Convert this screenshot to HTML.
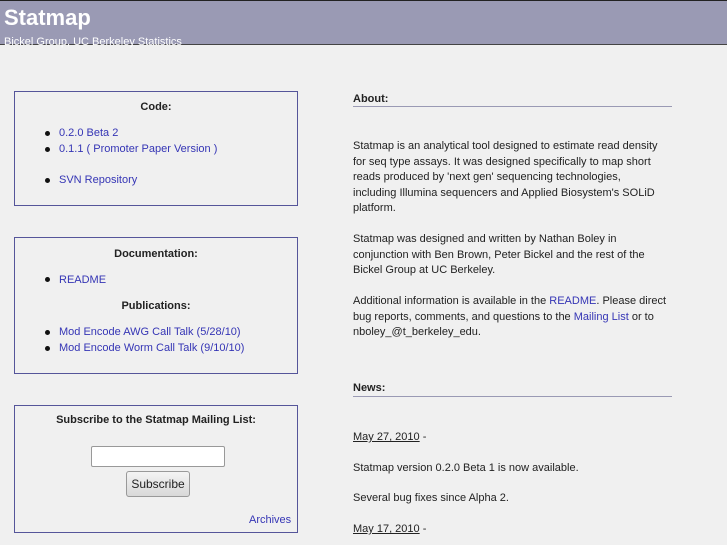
<!DOCTYPE html>
<html><head><meta charset="utf-8"><style>
*{margin:0;padding:0;box-sizing:border-box}
body{width:727px;height:545px;overflow:hidden;background:#f0f0f0;font-family:"Liberation Sans",sans-serif;font-size:11px;color:#222;position:relative}
.a{position:absolute;white-space:nowrap}
a{color:#3535b5;text-decoration:none}
#hd{position:absolute;left:0;top:0;width:727px;height:45px;background:#9a9ab4;border-top:1px solid #222;border-bottom:1px solid #444}
.box{position:absolute;left:14px;width:284px;border:1px solid #55559a;background:#f0f0f0}
.b{font-weight:bold}
.dot{position:absolute;width:5px;height:5px;border-radius:50%;background:#111}
.hr{position:absolute;left:353px;width:319px;height:1px;background:#9a9ab4}
.p{position:absolute;left:353px;line-height:15.5px;width:330px}
</style></head><body>
<div id="hd"></div>
<div class="a" style="left:4px;top:5px;font-size:22px;font-weight:bold;color:#fff">Statmap</div>
<div class="a" style="left:4px;top:36px;font-size:11px;color:#fff">Bickel Group, UC Berkeley Statistics</div>

<div class="box" style="top:91px;height:115px"></div>
<div class="a b" style="left:14px;width:284px;text-align:center;top:101px">Code:</div>
<div class="dot" style="left:45px;top:131px"></div><a class="a" style="left:59px;top:127px">0.2.0 Beta 2</a>
<div class="dot" style="left:45px;top:147px"></div><a class="a" style="left:59px;top:143px">0.1.1 ( Promoter Paper Version )</a>
<div class="dot" style="left:45px;top:178px"></div><a class="a" style="left:59px;top:174px">SVN Repository</a>

<div class="box" style="top:237px;height:137px"></div>
<div class="a b" style="left:14px;width:284px;text-align:center;top:248px">Documentation:</div>
<div class="dot" style="left:45px;top:277px"></div><a class="a" style="left:59px;top:274px">README</a>
<div class="a b" style="left:14px;width:284px;text-align:center;top:300px">Publications:</div>
<div class="dot" style="left:45px;top:330px"></div><a class="a" style="left:59px;top:326px">Mod Encode AWG Call Talk (5/28/10)</a>
<div class="dot" style="left:45px;top:346px"></div><a class="a" style="left:59px;top:342px">Mod Encode Worm Call Talk (9/10/10)</a>

<div class="box" style="top:405px;height:128px"></div>
<div class="a b" style="left:14px;width:284px;text-align:center;top:414px">Subscribe to the Statmap Mailing List:</div>
<div style="position:absolute;left:91px;top:446px;width:134px;height:21px;background:#fff;border:1px solid #999;border-radius:2px"></div>
<div style="position:absolute;left:126px;top:471px;width:64px;height:26px;background:linear-gradient(#f4f4f4,#d8d8d8);border:1px solid #999;border-radius:3px;text-align:center;line-height:25px;font-size:12px">Subscribe</div>
<a class="a" style="left:249px;top:514px">Archives</a>

<div class="a b" style="left:353px;top:93px">About:</div>
<div class="hr" style="top:106px"></div>
<div class="p" style="top:139px">Statmap is an analytical tool designed to estimate read density<br>for seq type assays. It was designed specifically to map short<br>reads produced by 'next gen' sequencing technologies,<br>including Illumina sequencers and Applied Biosystem's SOLiD<br>platform.</div>
<div class="p" style="top:232px">Statmap was designed and written by Nathan Boley in<br>conjunction with Ben Brown, Peter Bickel and the rest of the<br>Bickel Group at UC Berkeley.</div>
<div class="p" style="top:294px">Additional information is available in the <a>README</a>. Please direct<br>bug reports, comments, and questions to the <a>Mailing List</a> or to<br>nboley_@t_berkeley_edu.</div>

<div class="a b" style="left:353px;top:382px">News:</div>
<div class="hr" style="top:396px"></div>
<div class="a" style="left:353px;top:431px"><u>May 27, 2010</u> -</div>
<div class="a" style="left:353px;top:462px">Statmap version 0.2.0 Beta 1 is now available.</div>
<div class="a" style="left:353px;top:492px">Several bug fixes since Alpha 2.</div>
<div class="a" style="left:353px;top:523px"><u>May 17, 2010</u> -</div>
</body></html>
